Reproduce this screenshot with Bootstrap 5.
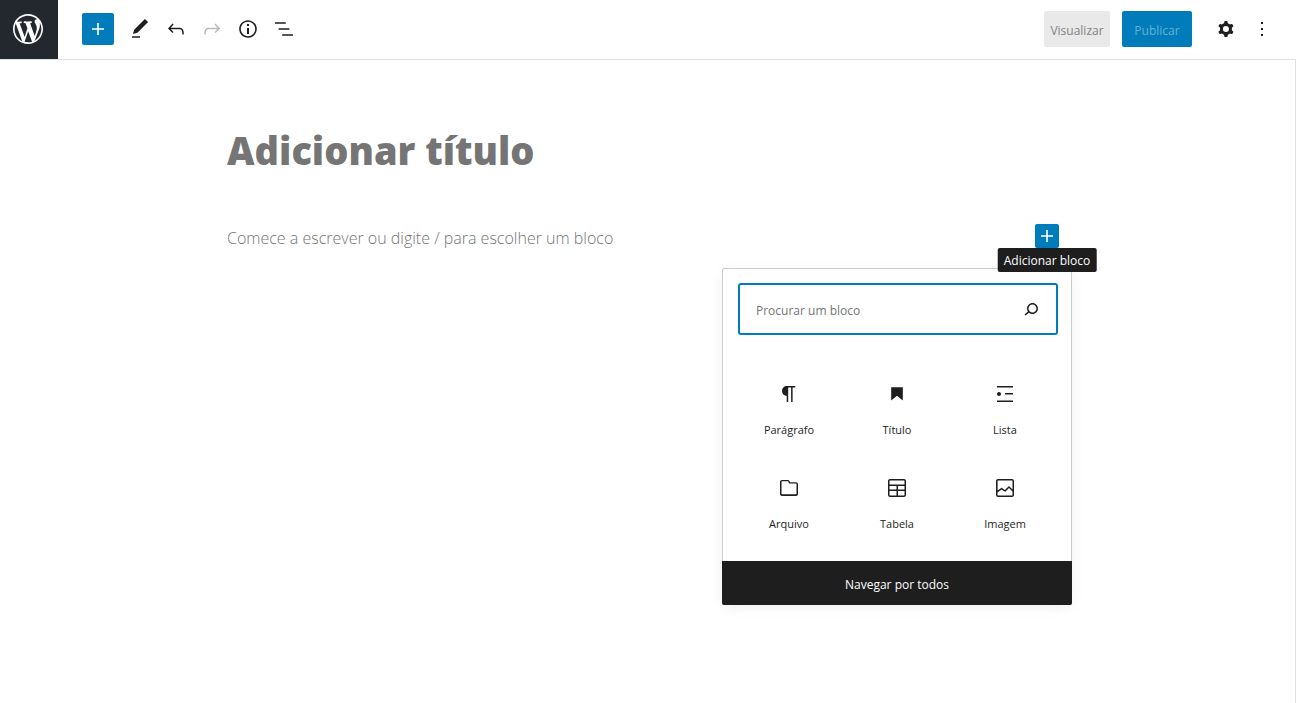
<!DOCTYPE html>
<html lang="pt-BR">
<head>
<meta charset="utf-8">
<meta name="viewport" content="width=device-width, initial-scale=1">
<title>Adicionar título</title>
<link href="https://cdn.jsdelivr.net/npm/bootstrap@5.3.0/dist/css/bootstrap.min.css" rel="stylesheet">
<style>
  :root { --wp-blue: #007cba; --wp-ink: #1e1e1e; --wp-muted: #757575; }
  body { font-family: "Segoe UI", "Open Sans", "Noto Sans", sans-serif; font-size: 12px; color: var(--wp-ink); }
  svg { display: block; fill: currentColor; }
  .icon { width: 24px; height: 24px; }
  .topbar { border-bottom: 1px solid #e0e0e0; }
  .site-logo { width: 58px; height: 59px; padding: 0 2px 1px 0; background: #23282e; color: #fff; }
  .site-logo svg { width: 36px; height: 36px; }
  .tools { height: 58px; padding: 0 16px 0 24px; }
  .btn { --bs-btn-border-radius: 2px; --bs-btn-font-size: 12px; --bs-btn-border-width: 0; --bs-btn-padding-x: 6px; --bs-btn-padding-y: 0; }
  .btn-tool { width: 36px; height: 36px; color: var(--wp-ink); }
  .btn-tool:disabled { color: var(--wp-ink); opacity: .3; border: 0; }
  .btn-blue, .btn-blue:disabled { background: var(--wp-blue); color: #fff; opacity: 1; }
  .btn-add { width: 32px; height: 32px; }
  .btn-preview, .btn-publish { height: 36px; padding: 3px 0 0; }
  .btn-preview:disabled { width: 66px; background: #e9e9e9; color: #828282; opacity: 1; }
  .btn-publish, .btn-publish:disabled { width: 70px; margin: 0 16px 0 12px; color: #66b0d6; }
  .editor { border-right: 1px solid #e0e0e0; padding-top: 64px; }
  .canvas { width: 100%; max-width: 841px; }
  .field { border: 0; outline: 0; padding: 0; background: transparent; width: 100%; display: block; }
  .field::placeholder, .search-field::placeholder { color: var(--wp-muted); opacity: 1; }
  .field-title { font-size: 38px; font-weight: 800; height: 56px; padding-bottom: 4px; }
  .block-row { margin-top: 44px; padding-right: 9px; }
  .field-text { font-size: 16px; font-weight: 300; height: 28px; }
  .btn-inserter { width: 24px; height: 24px; }
  .tip { top: 24px; left: 50%; transform: translateX(-50%); height: 24px; line-height: 26px; padding: 0 6px; background: var(--wp-ink); color: #fff; border-radius: 2px; z-index: 3; }
  .inserter { top: 44px; right: -13px; width: 350px; background: #fff; border: 1px solid #ccc; border-radius: 2px; box-shadow: 0 3px 15px -3px rgba(0,0,0,.09); z-index: 2; }
  .search-wrap { padding: 14px 13px 0 15px; }
  .search-box { height: 52px; padding: 0 13px 0 16px; border: 2px solid var(--wp-blue); border-radius: 3px; }
  .search-field { border: 0; outline: 0; min-width: 0; padding: 3px 0 0; }
  .blocks { padding: 28px 12px 10px; }
  .block-item { width: 100%; height: 94px; gap: 16px; font-size: 11px; line-height: 16px; background: none; border: 0; color: var(--wp-ink); }
  .browse-all { height: 44px; margin: 0 -1px -1px; padding: 3px 0 0; background: var(--wp-ink); color: #fff; border: 0; border-radius: 0 0 2px 2px; }
</style>
</head>
<body class="d-flex flex-column min-vh-100 bg-white">
<header class="topbar d-flex align-items-start">
  <a href="#" class="site-logo d-flex align-items-center justify-content-center flex-shrink-0" aria-label="Ver posts">
    <svg viewBox="-2 -2 24 24"><path d="M20 10c0-5.51-4.49-10-10-10C4.48 0 0 4.49 0 10c0 5.52 4.48 10 10 10 5.51 0 10-4.48 10-10zM7.78 15.37L4.37 6.22c.55-.02 1.17-.08 1.17-.08.5-.06.44-1.13-.06-1.11 0 0-1.45.11-2.37.11-.18 0-.37 0-.58-.01C4.12 2.69 6.87 1.11 10 1.11c2.33 0 4.45.87 6.05 2.34-.68-.11-1.65.39-1.65 1.58 0 .74.45 1.36.9 2.1.35.61.55 1.36.55 2.46 0 1.49-1.4 5-1.4 5l-3.03-8.37c.54-.02.82-.17.82-.17.5-.05.44-1.25-.06-1.22 0 0-1.44.12-2.38.12-.87 0-2.33-.12-2.33-.12-.5-.03-.56 1.2-.06 1.22l.92.08 1.26 3.41zM17.41 10c.24-.64.74-1.87.43-4.25.7 1.29 1.05 2.71 1.05 4.25 0 3.29-1.73 6.24-4.4 7.78.97-2.59 1.94-5.2 2.92-7.78zM6.1 18.09C3.12 16.65 1.11 13.53 1.11 10c0-1.3.23-2.48.72-3.59C3.25 10.3 4.67 14.2 6.1 18.09zm4.03-6.63l2.58 6.98c-.86.29-1.76.45-2.71.45-.79 0-1.57-.11-2.29-.33.81-2.38 1.62-4.74 2.42-7.1z"/></svg>
  </a>
  <div class="tools d-flex flex-grow-1 align-items-center justify-content-between">
    <div class="d-flex align-items-center" role="toolbar" aria-label="Ferramentas do documento">
      <button type="button" class="btn btn-blue btn-add d-flex align-items-center justify-content-center p-0 me-2" aria-label="Adicionar bloco"><svg class="icon" viewBox="0 0 24 24"><path d="M18 11.2h-5.2V6h-1.6v5.2H6v1.6h5.2V18h1.6v-5.2H18z"/></svg></button>
      <button type="button" class="btn btn-tool" aria-label="Ferramentas"><svg class="icon" viewBox="0 0 24 24"><path d="M20.1 5.1L16.9 2 6.2 12.7l-1.3 4.4 4.5-1.3L20.1 5.1zM4 20.8h8v-1.5H4v1.5z"/></svg></button>
      <button type="button" class="btn btn-tool" aria-label="Desfazer"><svg class="icon" viewBox="0 0 24 24"><path d="M18.3 11.7c-.6-.6-1.4-.9-2.3-.9H6.7l2.9-3.3-1.1-1-4.5 5L8.5 16l1-1-2.7-2.7H16c.5 0 .9.2 1.3.5 1 1 1 3.4 1 4.5v.3h1.5v-.2c0-1.5 0-4.3-1.5-5.7z"/></svg></button>
      <button type="button" class="btn btn-tool" aria-label="Refazer" disabled><svg class="icon" viewBox="0 0 24 24"><path d="M15.6 6.5l-1.1 1 2.9 3.3H8c-.9 0-1.7.3-2.3.9-1.4 1.5-1.4 4.2-1.4 5.6v.2h1.5v-.3c0-1.1 0-3.5 1-4.5.3-.3.7-.5 1.3-.5h9.2L14.5 15l1.1 1.1 4.6-4.6-4.6-5z"/></svg></button>
      <button type="button" class="btn btn-tool" aria-label="Detalhes"><svg class="icon" viewBox="0 0 24 24"><path d="M12 3.2c-4.8 0-8.8 3.9-8.8 8.8 0 4.8 3.9 8.8 8.8 8.8 4.8 0 8.8-3.9 8.8-8.8 0-4.8-4-8.8-8.8-8.8zm0 16c-4 0-7.2-3.3-7.2-7.2C4.8 8 8 4.8 12 4.8s7.2 3.3 7.2 7.2c0 4-3.2 7.2-7.2 7.2zM11 17h2v-6h-2v6zm0-8h2V7h-2v2z"/></svg></button>
      <button type="button" class="btn btn-tool" aria-label="Visualização em lista"><svg class="icon" viewBox="0 0 24 24"><path d="M13.8 5.2H3v1.5h10.8V5.2zm-3.6 12v1.5H21v-1.5H10.2zm7.2-6H6.6v1.5h10.8v-1.5z"/></svg></button>
    </div>
    <div class="d-flex align-items-center">
      <button type="button" class="btn btn-preview" disabled>Visualizar</button>
      <button type="button" class="btn btn-blue btn-publish" disabled>Publicar</button>
      <button type="button" class="btn btn-tool" aria-label="Configurações"><svg class="icon" viewBox="0 0 24 24"><path fill-rule="evenodd" d="M10.289 4.836A1 1 0 0111.275 4h1.306a1 1 0 01.987.836l.244 1.466c.787.26 1.503.679 2.108 1.218l1.393-.522a1 1 0 011.216.437l.653 1.13a1 1 0 01-.23 1.273l-1.148.944a6.025 6.025 0 010 2.435l1.149.946a1 1 0 01.23 1.272l-.653 1.13a1 1 0 01-1.216.437l-1.394-.522c-.605.54-1.32.958-2.108 1.218l-.244 1.466a1 1 0 01-.987.836h-1.306a1 1 0 01-.986-.836l-.244-1.466a5.995 5.995 0 01-2.108-1.218l-1.394.522a1 1 0 01-1.217-.436l-.653-1.131a1 1 0 01.23-1.272l1.149-.946a6.026 6.026 0 010-2.435l-1.148-.944a1 1 0 01-.23-1.272l.653-1.131a1 1 0 011.217-.437l1.393.522a5.994 5.994 0 012.108-1.218l.244-1.466zM14.929 12a3 3 0 11-6 0 3 3 0 016 0z"/></svg></button>
      <button type="button" class="btn btn-tool" aria-label="Opções"><svg class="icon" viewBox="0 0 24 24"><path d="M13 19h-2v-2h2v2zm0-6h-2v-2h2v2zm0-6h-2V5h2v2z"/></svg></button>
    </div>
  </div>
</header>

<main class="editor flex-grow-1">
  <div class="canvas mx-auto">
    <input class="field field-title" type="text" placeholder="Adicionar título" aria-label="Adicionar título">
    <div class="block-row d-flex align-items-start">
      <input class="field field-text flex-grow-1" type="text" placeholder="Comece a escrever ou digite / para escolher um bloco" aria-label="Bloco vazio">
      <div class="position-relative">
        <button type="button" class="btn btn-blue btn-inserter d-block p-0" aria-describedby="tip-add" aria-label="Adicionar bloco"><svg class="icon" viewBox="0 0 24 24"><path d="M18 11.2h-5.2V6h-1.6v5.2H6v1.6h5.2V18h1.6v-5.2H18z"/></svg></button>
        <div class="tip position-absolute text-nowrap" id="tip-add" role="tooltip">Adicionar bloco</div>
        <section class="inserter position-absolute" aria-label="Inserir bloco">
          <div class="search-wrap">
            <div class="search-box d-flex align-items-center">
              <input class="search-field flex-grow-1" type="text" placeholder="Procurar um bloco" aria-label="Procurar um bloco">
              <svg class="icon" viewBox="0 0 24 24"><path d="M13.5 6C10.5 6 8 8.5 8 11.5c0 1.1.3 2.1.9 3l-3.4 3 1 1.1 3.4-2.9c1 .9 2.2 1.4 3.6 1.4 3 0 5.5-2.5 5.5-5.5C19 8.5 16.5 6 13.5 6zm0 9.5c-2.2 0-4-1.8-4-4s1.8-4 4-4 4 1.8 4 4-1.8 4-4 4z"/></svg>
            </div>
          </div>
          <div class="blocks row g-0">
            <div class="col-4"><button type="button" class="block-item d-flex flex-column align-items-center justify-content-center p-0"><svg class="icon" viewBox="0 0 24 24"><path d="M18.3 4H9.9v-.1l-.9.2c-2.3.4-4 2.4-4 4.8s1.7 4.4 4 4.8l.7.1V20h1.5V5.5h2.9V20h1.5V5.5h2.7V4z"/></svg><span>Parágrafo</span></button></div>
            <div class="col-4"><button type="button" class="block-item d-flex flex-column align-items-center justify-content-center p-0"><svg class="icon" viewBox="0 0 24 24"><path d="M6.2 5.2v13.4l5.8-4.8 5.8 4.8V5.2z"/></svg><span>Título</span></button></div>
            <div class="col-4"><button type="button" class="block-item d-flex flex-column align-items-center justify-content-center p-0"><svg class="icon" viewBox="0 0 24 24"><path d="M4 4v1.5h16V4H4zm8 8.5h8V11h-8v1.5zM4 20h16v-1.5H4V20zm4-8c0-1.1-.9-2-2-2s-2 .9-2 2 .9 2 2 2 2-.9 2-2z"/></svg><span>Lista</span></button></div>
            <div class="col-4"><button type="button" class="block-item d-flex flex-column align-items-center justify-content-center p-0"><svg class="icon" viewBox="0 0 24 24"><path d="M19 6.2h-5.9l-.6-1.1c-.3-.7-1-1.1-1.8-1.1H5c-1.1 0-2 .9-2 2v12c0 1.1.9 2 2 2h14c1.1 0 2-.9 2-2V8.2c0-1.1-.9-2-2-2zm.5 11.6c0 .3-.2.5-.5.5H5c-.3 0-.5-.2-.5-.5V5.8c0-.3.2-.5.5-.5h5.8c.2 0 .4.1.4.3l1 2H19c.3 0 .5.2.5.5v9.7z"/></svg><span>Arquivo</span></button></div>
            <div class="col-4"><button type="button" class="block-item d-flex flex-column align-items-center justify-content-center p-0"><svg class="icon" viewBox="0 0 24 24"><path d="M19 3H5c-1.1 0-2 .9-2 2v14c0 1.1.9 2 2 2h14c1.1 0 2-.9 2-2V5c0-1.1-.9-2-2-2zM5 4.5h14c.3 0 .5.2.5.5v3.5h-15V5c0-.3.2-.5.5-.5zm8 5.5h6.5v3.5H13V10zm-1.5 3.5h-7V10h7v3.5zm-7 5.5v-4h7v4.5H5c-.3 0-.5-.2-.5-.5zm14.5.5h-6V15h6.5v4c0 .3-.2.5-.5.5z"/></svg><span>Tabela</span></button></div>
            <div class="col-4"><button type="button" class="block-item d-flex flex-column align-items-center justify-content-center p-0"><svg class="icon" viewBox="0 0 24 24"><path d="M19 3H5c-1.1 0-2 .9-2 2v14c0 1.1.9 2 2 2h14c1.1 0 2-.9 2-2V5c0-1.1-.9-2-2-2zM5 4.5h14c.3 0 .5.2.5.5v8.4l-3-2.9c-.3-.3-.8-.3-1 0L11.9 14 9 12c-.3-.2-.6-.2-.8 0l-3.6 2.6V5c-.1-.3.1-.5.4-.5zm14 15H5c-.3 0-.5-.2-.5-.5v-2.4l4.1-3 3 1.9c.3.2.7.2.9-.1L16 12l3.5 3.4V19c0 .3-.2.5-.5.5z"/></svg><span>Imagem</span></button></div>
          </div>
          <div class="d-grid"><button type="button" class="browse-all">Navegar por todos</button></div>
        </section>
      </div>
    </div>
  </div>
</main>
<script src="https://cdn.jsdelivr.net/npm/bootstrap@5.3.0/dist/js/bootstrap.bundle.min.js"></script>
</body>
</html>
